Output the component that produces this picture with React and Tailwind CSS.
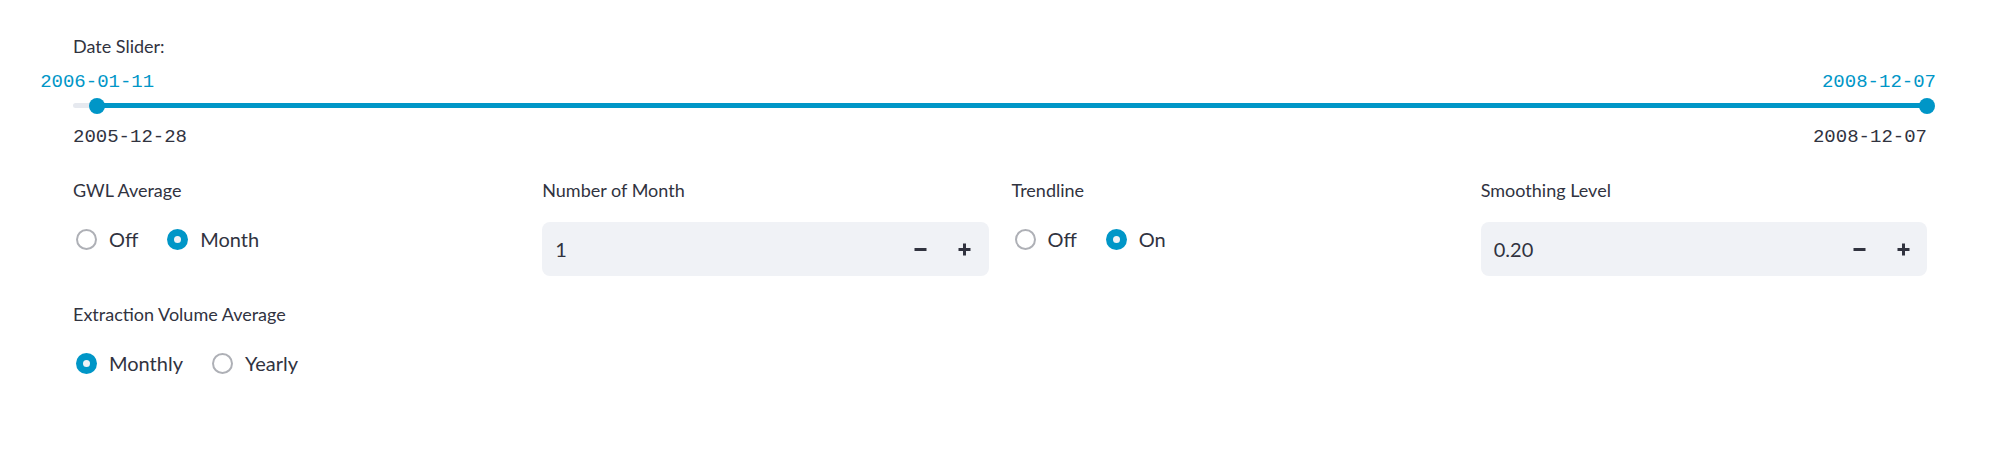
import { useState } from "react";

function Radio({ label, checked, onClick }) {
  return (
    <button type="button" onClick={onClick} className="flex items-center gap-[12px] ml-[3px] mr-[26px]">
      {checked ? (
        <span className="w-[21px] h-[21px] rounded-full bg-[#0096c7] flex items-center justify-center">
          <span className="w-[7px] h-[7px] rounded-full bg-[#f0f2f6]" />
        </span>
      ) : (
        <span className="w-[21px] h-[21px] rounded-full border-[2.5px] border-[#aeb0b6] bg-white" />
      )}
      <span className="text-[20px] text-[#31333f] leading-[24px]">{label}</span>
    </button>
  );
}

function RadioGroup({ label, options, value, onChange }) {
  return (
    <div className="flex flex-col">
      <div className="h-[24px] text-[18px] leading-[24px] text-[#31333f]">{label}</div>
      <div className="mt-[13px] h-[48px] flex items-center">
        {options.map((o) => (
          <Radio key={o} label={o} checked={value === o} onClick={() => onChange(o)} />
        ))}
      </div>
    </div>
  );
}

function NumberInput({ label, value, step, decimals, onChange }) {
  return (
    <div className="flex flex-col">
      <div className="h-[24px] text-[18px] leading-[24px] text-[#31333f]">{label}</div>
      <div className="mt-[20px] h-[54px] rounded-[8px] bg-[#f0f2f6] flex items-center pl-[13px] pr-[2px]">
        <span className="flex-1 text-[20px] text-[#31333f]">{value.toFixed(decimals)}</span>
        <button type="button" onClick={() => onChange(value - step)} className="w-[44px] h-full flex items-center justify-center">
          <svg width="13" height="13" viewBox="0 0 13 13">
            <rect x="0.5" y="5" width="12" height="3" fill="#31333f" />
          </svg>
        </button>
        <button type="button" onClick={() => onChange(value + step)} className="w-[44px] h-full flex items-center justify-center">
          <svg width="13" height="13" viewBox="0 0 13 13">
            <rect x="0.5" y="5" width="12" height="3" fill="#31333f" />
            <rect x="5" y="0.5" width="3" height="12" fill="#31333f" />
          </svg>
        </button>
      </div>
    </div>
  );
}

export default function App() {
  const [gwl, setGwl] = useState("Month");
  const [months, setMonths] = useState(1);
  const [trend, setTrend] = useState("On");
  const [smooth, setSmooth] = useState(0.2);
  const [extract, setExtract] = useState("Monthly");

  // slider: 2005-12-28 .. 2008-12-07, value 2006-01-11 .. 2008-12-07
  const lo = (14 / 1075) * 100;

  return (
    <div className="w-[2008px] h-[467px] bg-white font-['Lato','Noto_Sans',sans-serif] text-[#31333f]">
      <div className="w-[1854px] ml-[73px] pt-[34px] flex flex-col">
        {/* Date slider */}
        <div className="h-[24px] text-[18px] leading-[24px]">Date Slider:</div>
        <div className="relative mt-[13px] h-[22px] font-['Liberation_Mono',monospace] text-[19px] leading-[22px] text-[#0096c7]">
          <span className="absolute -translate-x-1/2" style={{ left: `${lo}%` }}>2006-01-11</span>
          <span className="absolute right-[-9px]">2008-12-07</span>
        </div>
        <div className="relative mt-[10px] h-[5px] rounded-full bg-[#e6e9ef]">
          <div className="absolute top-0 bottom-0 right-0 bg-[#0096c7]" style={{ left: `${lo}%` }} />
          <span
            className="absolute top-1/2 w-[16px] h-[16px] rounded-full bg-[#0096c7] -translate-x-1/2 -translate-y-1/2"
            style={{ left: `${lo}%` }}
          />
          <span className="absolute top-1/2 left-full w-[16px] h-[16px] rounded-full bg-[#0096c7] -translate-x-1/2 -translate-y-1/2" />
        </div>
        <div className="mt-[18px] h-[22px] flex justify-between font-['Liberation_Mono',monospace] text-[19px] leading-[22px] text-[#31333f]">
          <span>2005-12-28</span>
          <span>2008-12-07</span>
        </div>

        {/* Controls */}
        <div className="mt-[30px] grid grid-cols-4 gap-x-[23px]">
          <RadioGroup label="GWL Average" options={["Off", "Month"]} value={gwl} onChange={setGwl} />
          <NumberInput label="Number of Month" value={months} step={1} decimals={0} onChange={setMonths} />
          <RadioGroup label="Trendline" options={["Off", "On"]} value={trend} onChange={setTrend} />
          <NumberInput label="Smoothing Level" value={smooth} step={0.01} decimals={2} onChange={setSmooth} />
        </div>

        <div className="mt-[26px]">
          <RadioGroup
            label="Extraction Volume Average"
            options={["Monthly", "Yearly"]}
            value={extract}
            onChange={setExtract}
          />
        </div>
      </div>
    </div>
  );
}
